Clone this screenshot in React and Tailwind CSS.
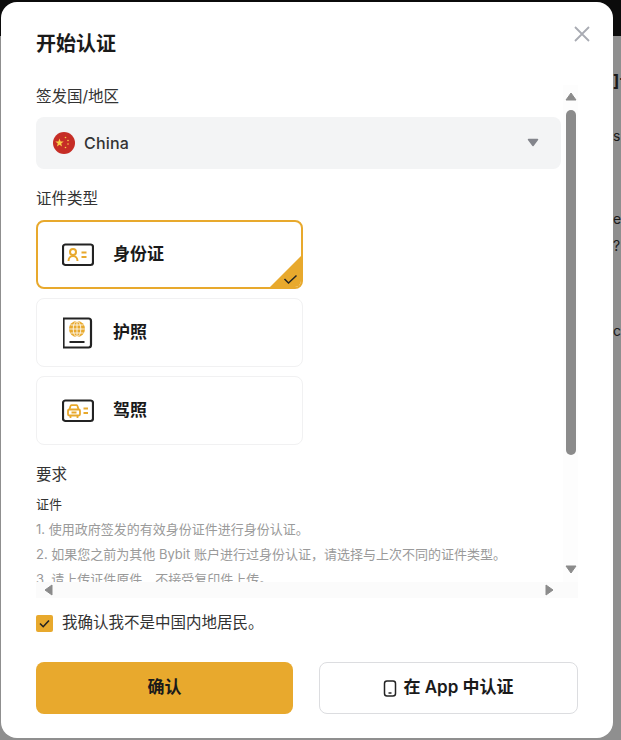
import React from 'react'

const font = { fontFamily: '"Inter", "Noto Sans CJK SC", sans-serif' }

const IdIcon = () => (
  <svg width="32" height="24" viewBox="0 0 32 24" fill="none">
    <rect x="1" y="1.500" width="30" height="20.500" rx="2.500" stroke="#232323" strokeWidth="2.200" />
    <circle cx="11" cy="9" r="3" stroke="#E8A92D" strokeWidth="2" />
    <path d="M6.500 18c0-3 2-5 4.500-5s4.500 2 4.500 5" stroke="#E8A92D" strokeWidth="2" />
    <path d="M19.500 9.500h5M19.500 14h5" stroke="#E8A92D" strokeWidth="2" />
  </svg>
)

const PassportIcon = () => (
  <svg width="30" height="32" viewBox="0 0 30 32" fill="none">
    <path d="M0.500 1.500h25a2.500 2.500 0 0 1 2.500 2.500v24a2.500 2.500 0 0 1-2.500 2.500h-25z" stroke="#232323" strokeWidth="2.200" />
    <circle cx="14" cy="12" r="8" fill="#E8A92D" />
    <path d="M6 12h16M14 4v16M7.500 8h13M7.500 16h13" stroke="#fff" strokeWidth="0.800" />
    <ellipse cx="14" cy="12" rx="3.800" ry="7.800" stroke="#fff" strokeWidth="0.800" />
    <path d="M6.500 25h15" stroke="#232323" strokeWidth="2.200" />
  </svg>
)

const CarIcon = () => (
  <svg width="32" height="24" viewBox="0 0 32 24" fill="none">
    <rect x="1" y="1.500" width="30" height="20.500" rx="2.500" stroke="#232323" strokeWidth="2.200" />
    <path d="M7.500 10.500l1-3.500a1 1 0 0 1 1-.800h5a1 1 0 0 1 1 .800l1 3.500" stroke="#E8A92D" strokeWidth="1.800" />
    <rect x="6" y="10.500" width="12" height="6" rx="1.200" stroke="#E8A92D" strokeWidth="1.800" />
    <path d="M8.500 16.500v2.500M15.500 16.500v2.500M9.500 13.500h5" stroke="#E8A92D" strokeWidth="1.800" />
    <path d="M21.500 9.500h4.500M21.500 14h4.500" stroke="#E8A92D" strokeWidth="2" />
  </svg>
)

const Flag = () => (
  <svg width="22" height="22" viewBox="0 0 22 22">
    <circle cx="11" cy="11" r="11" fill="#C62D26" />
    <path d="M6.500 6.500l1.100 3 3.100.1-2.500 1.900.9 3-2.600-1.800-2.600 1.800.9-3-2.500-1.900 3.100-.1z" fill="#F9CF47" />
    <circle cx="12.500" cy="5.500" r="0.800" fill="#F9CF47" />
    <circle cx="15" cy="8.500" r="0.800" fill="#F9CF47" />
    <circle cx="15" cy="12" r="0.800" fill="#F9CF47" />
    <circle cx="12.500" cy="15.500" r="0.800" fill="#F9CF47" />
  </svg>
)

const Arrow = ({ points }) => (
  <svg width="14" height="14" viewBox="0 0 14 14">
    <polygon points={points} fill="#8b8b8b" stroke="#8b8b8b" strokeWidth="1" strokeLinejoin="round" />
  </svg>
)

const DocOption = ({ icon, label, active }) => (
  <div
    className={`relative flex items-center w-[267px] h-[69px] rounded-lg overflow-hidden ${
      active ? 'border-2 border-[#E8A92D]' : 'border border-[#f1f1f2]'
    }`}
  >
    <div className={`flex justify-center w-[32px] ${active ? 'ml-[24px]' : 'ml-[25px]'}`}>{icon}</div>
    <span className="ml-[19px] text-[17px] font-bold text-[#1a1a1a]">{label}</span>
    {active && (
      <svg className="absolute right-0 bottom-0" width="31" height="31" viewBox="0 0 31 31">
        <polygon points="31,0 31,31 0,31" fill="#E8A92D" />
        <path d="M14.500 23l4 4 8-7.500" fill="none" stroke="#232323" strokeWidth="1.500" />
      </svg>
    )}
  </div>
)

export default function App() {
  return (
    <div className="relative w-[621px] h-[740px] overflow-hidden bg-[#8f8f8f]" style={font}>
      <div className="h-[36px] bg-[#0b0b0b]" />

      {/* page behind the overlay */}
      <div className="absolute left-[613px] top-[71px] text-[17px] font-bold leading-5 text-[#1a1a1a] whitespace-nowrap">]认</div>
      <div className="absolute left-[613px] top-[126px] text-sm leading-5 text-[#1a1a1a]">s</div>
      <div className="absolute left-[613px] top-[209px] text-sm leading-5 text-[#1a1a1a]">e</div>
      <div className="absolute left-[613px] top-[236px] text-sm leading-5 text-[#1a1a1a]">?</div>
      <div className="absolute left-[613px] top-[321px] text-sm leading-5 text-[#1a1a1a]">c</div>

      <div className="absolute left-[1px] top-[2px] w-[612px] h-[736px] rounded-[16px] bg-white pl-[35px] pr-[35px]">
        <button className="absolute right-[22px] top-[23px] text-[#a9abb3]">
          <svg width="18" height="18" viewBox="0 0 18 18" fill="none">
            <path d="M2 2l14 14M16 2L2 16" stroke="currentColor" strokeWidth="1.800" />
          </svg>
        </button>

        <h2 className="pt-[28px] text-[20px] leading-[28px] font-bold text-[#1a1a1a]">开始认证</h2>

        {/* scroll box */}
        <div className="mt-[27px] w-[542px] h-[513px] flex flex-col">
          <div className="flex flex-1 min-h-0">
            <div className="w-[527px] overflow-hidden">
              <div className="pt-[1px] text-[15.500px] leading-[22px] text-[#333]">签发国/地区</div>
              <div className="mt-[9px] flex items-center h-[52px] w-[525px] rounded-lg bg-[#f3f4f5] pl-[17px] pr-[21px]">
                <Flag />
                <span className="ml-[9px] text-base font-medium tracking-[0.2px] text-[#333]">China</span>
                <svg className="ml-auto" width="14" height="12" viewBox="0 0 14 12">
                  <path d="M2.500 2.500h9L7 8.500z" fill="#83858c" stroke="#83858c" strokeWidth="1.500" strokeLinejoin="round" />
                </svg>
              </div>
              <div className="mt-[19px] text-[15.500px] leading-[22px] text-[#333]">证件类型</div>
              <div className="mt-[10px] flex flex-col gap-[9px]">
                <DocOption icon={<IdIcon />} label="身份证" active />
                <DocOption icon={<PassportIcon />} label="护照" />
                <DocOption icon={<CarIcon />} label="驾照" />
              </div>
              <div className="mt-[19px] text-[15.500px] leading-[22px] text-[#333]">要求</div>
              <div className="mt-[8px] text-[13px] leading-[20px] text-[#333]">证件</div>
              <div className="mt-[5px] flex flex-col gap-[5px] text-[13px] leading-[20px] text-[#9a9a9a] whitespace-nowrap">
                <div>1. 使用政府签发的有效身份证件进行身份认证。</div>
                <div>2. 如果您之前为其他 Bybit 账户进行过身份认证，请选择与上次不同的证件类型。</div>
                <div>3. 请上传证件原件，不接受复印件上传。</div>
              </div>
            </div>
            {/* vertical scrollbar */}
            <div className="w-[15px] bg-[#fdfdfd] flex flex-col items-center">
              <div className="h-[25px] pt-[5px]"><Arrow points="2,10 12,10 7,3" /></div>
              <div className="w-[10px] h-[345px] rounded-full bg-[#8b8b8b]" />
              <div className="mt-auto h-[19px]"><Arrow points="2,3 12,3 7,10" /></div>
            </div>
          </div>
          {/* horizontal scrollbar */}
          <div className="flex items-center justify-between h-[16px] bg-[#fbfbfb] pl-[6px] pr-[22px]">
            <Arrow points="10,2 10,12 3,7" />
            <Arrow points="4,2 4,12 11,7" />
          </div>
        </div>

        <div className="mt-[14px] flex items-center">
          <span className="flex items-center justify-center w-[17px] h-[17px] rounded-[2px] bg-[#E8A92D]">
            <svg width="13" height="13" viewBox="0 0 13 13" fill="none">
              <path d="M2 6.500l3.200 3.200L11 3.500" stroke="#232323" strokeWidth="1.600" />
            </svg>
          </span>
          <span className="ml-[9px] text-[15.500px] leading-[22px] text-[#333]">我确认我不是中国内地居民。</span>
        </div>

        <div className="mt-[28px] flex justify-between">
          <button className="w-[257px] h-[52px] rounded-lg bg-[#E8A92D] text-[17px] font-bold text-[#1a1a1a]">确认</button>
          <button className="flex items-center justify-center gap-[6px] w-[259px] h-[52px] rounded-lg border border-[#dcdde0] bg-white text-[17px] font-semibold text-[#1a1a1a]">
            <svg width="14" height="17" viewBox="0 0 14 17" fill="none">
              <rect x="1.500" y="1" width="11" height="15" rx="2.500" stroke="#232323" strokeWidth="1.500" />
              <path d="M5.500 13h3" stroke="#232323" strokeWidth="1.500" />
            </svg>
            在 App 中认证
          </button>
        </div>
      </div>
    </div>
  )
}
